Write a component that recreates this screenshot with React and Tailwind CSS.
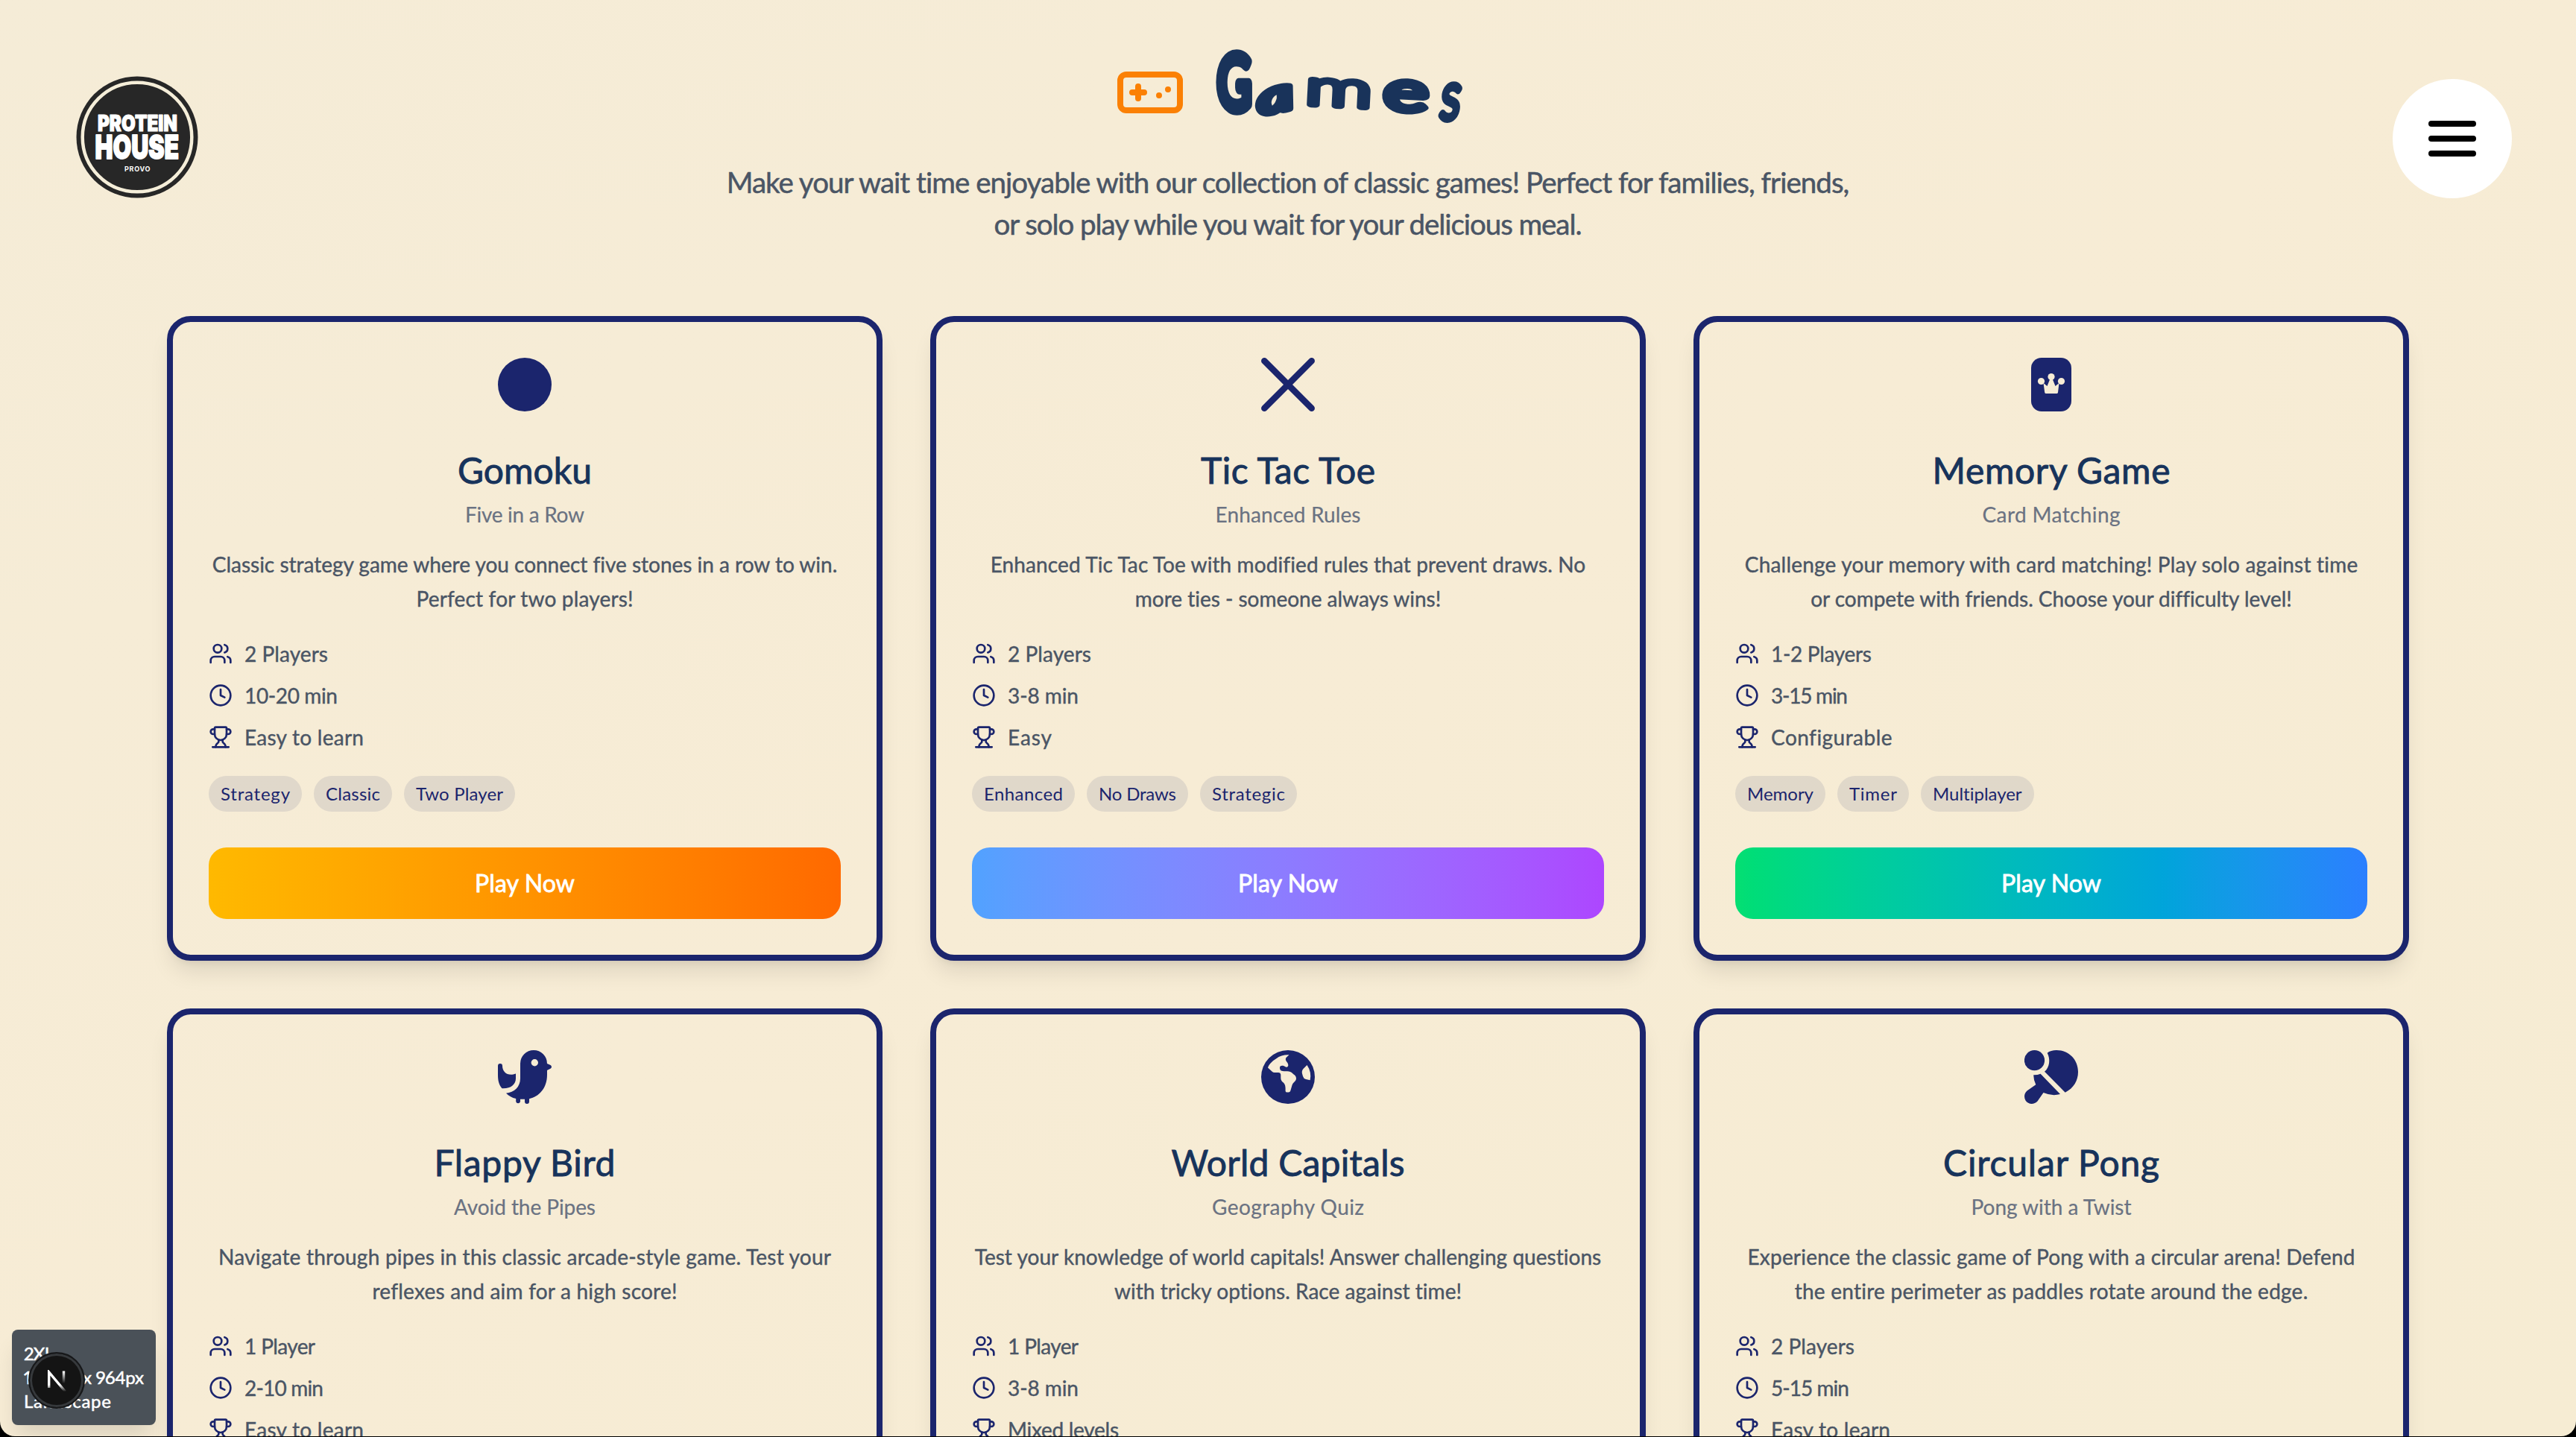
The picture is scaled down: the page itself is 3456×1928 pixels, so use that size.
import { useLayoutEffect, useRef, useState } from "react";
import { Users, Clock, Trophy } from "lucide-react";

/* One line of text, tracked so that its ink fills the given width. */
const BEARINGS = 1;
function Line({ w, className = "", children }) {
  const ref = useRef(null);
  const [ls, setLs] = useState(0);
  useLayoutEffect(() => {
    const natural = ref.current.getBoundingClientRect().width;
    setLs((w + BEARINGS - natural) / (children.length - 1));
  }, []);
  return (
    <span className={`block ${className}`}>
      <span ref={ref} className="inline-block whitespace-nowrap" style={{ letterSpacing: ls, marginRight: -ls }}>
        {children}
      </span>
    </span>
  );
}

const svg = { viewBox: "0 0 72 72", className: "size-[72px]", fill: "currentColor" };

const Stone = () => (
  <svg {...svg}><circle cx="36" cy="36" r="36" /></svg>
);
const Cross = () => (
  <svg {...svg} fill="none" stroke="currentColor" strokeWidth="8.5" strokeLinecap="round">
    <path d="M4.300 4.300 67.700 67.700M67.700 4.300 4.300 67.700" />
  </svg>
);
const Card = () => (
  <svg {...svg}>
    <rect x="9" width="54" height="72" rx="14" />
    <g fill="#f7ecd5">
      <circle cx="36" cy="25.5" r="4.6" />
      <circle cx="22.5" cy="31.5" r="4.6" />
      <circle cx="49.5" cy="31.5" r="4.6" />
      <path d="M25.5 34 30.500 38 34.500 28h3l4 10 5-4-1.500 12.500q-.3 1.500-1.800 1.500H29q-1.500 0-1.800-1.500Z" />
    </g>
  </svg>
);
const Bird = () => (
  <svg {...svg}>
    <path d="M0 21a3 3 0 0 1 6 0C6 30 14 35.500 24 31.500V38C24 46 17 52 5.500 51.300 1 46 0 40 0 33Z" />
    <path
      fillRule="evenodd"
      d="M11 57.700C22 57 30 49 30 38V18a18 18 0 0 1 36 0l4.500 2a2.600 2.600 0 0 1 0 4.700L66 27v6C66 51 55 62.500 42 65.200V69a3 3 0 0 1-6 0v-3.200h-6V69a3 3 0 0 1-5.800 0v-4C19 63.800 14.500 61.500 11 57.700ZM49.300 12a4.700 4.700 0 1 0 0 9.400 4.700 4.700 0 0 0 0-9.400Z"
    />
  </svg>
);
const Globe = () => (
  <svg {...svg}>
    <circle cx="36" cy="36" r="36" />
    <g fill="#f7ecd5">
      <path d="M37.500 6.300C31 6 25 7.500 20 11.500 13.500 15.500 10 20 9 23.500L15 29q1 1 3 1h5q3 0 3.300 3V37c0 4 2 5 4 7 2 2.500 2 4 2.300 7v4q.3 1.500 2.200 1.500h1.900q2 0 2.600-2l2.200-7.500c1-4 5.500-5 5.500-9s-3-5-5-7-4-2.800-7-2.800h-4.500c-4.500 0-5.500-2-5.500-4.700s3-3 5-2.400 3 2.400 5 1.400 1.500-4 0-6-3-4-1.500-6.500Z" />
      <path d="M61.500 20 56.500 25Q54 28 55 31.500l1 3.500q.7 3 4 4l5.600 1.300Q68 29.500 61.500 20Z" />
    </g>
  </svg>
);
const Paddle = () => (
  <svg {...svg}>
    <circle cx="13.500" cy="13.700" r="13.600" />
    <path d="M30.700 3.700C33.500 1.300 38 0 43 0 60 0 72 13 72 29 72 41 66 51 54.700 56.700L27 28.700C34 23 35 12 30.700 3.700Z" />
    <path d="M12.300 33.300Q17 33.600 21.600 31.700L48 59Q37 62 25.500 57L17.500 68.500C13 73.500 5 73 1.500 67.500C-1 63-.3 58 3.500 54.500L15.300 46.300Q12 39.500 12.300 33.300Z" />
  </svg>
);

const games = [
  {
    icon: Stone, title: ["Gomoku", 179], sub: ["Five in a Row", 159],
    desc: [["Classic strategy game where you connect five stones in a row to win.", 837], ["Perfect for two players!", 290]],
    meta: [["2 Players", 111], ["10-20 min", 124], ["Easy to learn", 159]],
    tags: [["Strategy", 92], ["Classic", 72], ["Two Player", 116]],
    grad: "from-[#ffb900] to-[#ff6900]",
  },
  {
    icon: Cross, title: ["Tic Tac Toe", 233], sub: ["Enhanced Rules", 194],
    desc: [["Enhanced Tic Tac Toe with modified rules that prevent draws. No", 797], ["more ties - someone always wins!", 410]],
    meta: [["2 Players", 111], ["3-8 min", 94], ["Easy", 58]],
    tags: [["Enhanced", 105], ["No Draws", 103], ["Strategic", 97]],
    grad: "from-[#51a2ff] to-[#ad46ff]",
  },
  {
    icon: Card, title: ["Memory Game", 318], sub: ["Card Matching", 184],
    desc: [["Challenge your memory with card matching! Play solo against time", 822], ["or compete with friends. Choose your difficulty level!", 643]],
    meta: [["1-2 Players", 134], ["3-15 min", 102], ["Configurable", 161]],
    tags: [["Memory", 88], ["Timer", 63], ["Multiplayer", 119]],
    grad: "from-[#05df72] to-[#2b7fff]",
  },
  {
    icon: Bird, title: ["Flappy Bird", 242], sub: ["Avoid the Pipes", 189],
    desc: [["Navigate through pipes in this classic arcade-style game. Test your", 821], ["reflexes and aim for a high score!", 408]],
    meta: [["1 Player", 94], ["2-10 min", 105], ["Easy to learn", 159]],
    grad: "from-[#ffb900] to-[#ff6900]",
  },
  {
    icon: Globe, title: ["World Capitals", 312], sub: ["Geography Quiz", 203],
    desc: [["Test your knowledge of world capitals! Answer challenging questions", 840], ["with tricky options. Race against time!", 466]],
    meta: [["1 Player", 94], ["3-8 min", 94], ["Mixed levels", 148]],
    grad: "from-[#51a2ff] to-[#ad46ff]",
  },
  {
    icon: Paddle, title: ["Circular Pong", 289], sub: ["Pong with a Twist", 214],
    desc: [["Experience the classic game of Pong with a circular arena! Defend", 814], ["the entire perimeter as paddles rotate around the edge.", 688]],
    meta: [["2 Players", 111], ["5-15 min", 104], ["Easy to learn", 159]],
    grad: "from-[#05df72] to-[#2b7fff]",
  },
];

const metaIcons = [Users, Clock, Trophy];

function GameCard({ game }) {
  const Icon = game.icon;
  return (
    <article className="flex h-[865px] flex-col rounded-[32px] border-8 border-[#1b256d] px-12 pt-12 text-center shadow-[0_20px_30px_-6px_rgba(0,0,0,0.1),0_8px_12px_-8px_rgba(0,0,0,0.1)]">
      <div className="flex h-[119px] justify-center text-[#1b256d]"><Icon /></div>
      <h2 className="text-[48px] leading-[64px] text-[#17335b] [-webkit-text-stroke:0.9px_#17335b]">
        <Line w={game.title[1]}>{game.title[0]}</Line>
      </h2>
      <p className="mt-[7px] text-[28px] leading-10 text-[#6a7282] [-webkit-text-stroke:0.2px_#6a7282]"><Line w={game.sub[1]}>{game.sub[0]}</Line></p>
      <p className="mt-6 h-[91px] text-[28px] leading-[46px] text-[#4a5565] [-webkit-text-stroke:0.4px_#4a5565]">
        {game.desc.map(([t, w]) => <Line key={t} w={w}>{t}</Line>)}
      </p>
      <ul className="mt-8 flex flex-col gap-4 text-left text-[28px] leading-10 text-[#4a5565] [-webkit-text-stroke:0.4px_#4a5565]">
        {game.meta.map(([t, w], i) => {
          const M = metaIcons[i];
          return (
            <li key={t} className="flex h-10 items-center gap-4">
              <M className="size-8 text-[#1b256d]" strokeWidth={2} />
              <Line w={w}>{t}</Line>
            </li>
          );
        })}
      </ul>
      {game.tags && (
        <>
          <div className="mt-8 flex gap-4 text-[24px] leading-8 text-[#1b256d]">
            {game.tags.map(([t, w]) => (
              <span key={t} className="rounded-full bg-[#1b256d]/10 px-4 py-2"><Line w={w}>{t}</Line></span>
            ))}
          </div>
          <button className={`mt-12 h-24 rounded-3xl bg-linear-to-r text-[32px] leading-[48px] text-white [-webkit-text-stroke:0.8px_white] ${game.grad}`}>
            <Line w={133}>Play Now</Line>
          </button>
        </>
      )}
    </article>
  );
}

function Logo() {
  return (
    <svg viewBox="0 0 164 164" className="absolute left-[102px] top-[102px] size-[164px] overflow-visible" fontFamily="Inter, sans-serif" fontWeight="900" fill="#fff">
      <circle cx="82" cy="82" r="81.500" fill="#272727" />
      <circle cx="82" cy="82" r="73.300" fill="none" stroke="#f5eed9" strokeWidth="4.500" />
      <g stroke="#fff" strokeLinejoin="round">
        <text transform="translate(29 74.200) scale(.78 1)" fontSize="29.500" strokeWidth="1.200" textLength="137" lengthAdjust="spacingAndGlyphs">PROTEIN</text>
        <text transform="translate(25.500 111) scale(.74 1)" fontSize="44" strokeWidth="1.800" textLength="152" lengthAdjust="spacingAndGlyphs">HOUSE</text>
      </g>
      <text x="65" y="128" fontSize="9" fontWeight="700" textLength="34.500">PROVO</text>
    </svg>
  );
}

function MenuButton() {
  return (
    <button className="absolute left-[3210px] top-[106px] flex size-40 flex-col items-center justify-center gap-3 rounded-full bg-white">
      <span className="h-2 w-16 rounded-full bg-black" />
      <span className="h-2 w-16 rounded-full bg-black" />
      <span className="h-2 w-16 rounded-full bg-black" />
    </button>
  );
}

function Heading() {
  return (
    <div className="flex h-[216px] justify-center">
      <svg viewBox="0 0 24 24" className="mt-[76px] size-24" fill="none" stroke="#fb8004" strokeWidth="2" strokeLinecap="round" strokeLinejoin="round">
        <rect x="2" y="6" width="20" height="12" rx="2" />
        <path d="M6 12h4M8 10v4M15 13v.01M18 11v.01" />
      </svg>
      <h1 className="ml-[35px] mt-[60px]">
        <svg
          viewBox="0 0 336 110"
          className="h-[110px] w-[336px] overflow-visible [&_text]:[vector-effect:non-scaling-stroke]"
          fontFamily="Lato, sans-serif"
          fontWeight="400"
          fill="#19335a"
          stroke="#19335a"
          strokeWidth="12"
          strokeLinejoin="round"
        >
          <text transform="translate(7 87) scale(.63 1)" fontSize="100">G</text>
          <text transform="translate(65 94) rotate(-12) scale(1.550 1)" fontSize="60" fontStyle="italic">a</text>
          <text transform="translate(124 80) rotate(3) scale(1.650 1)" fontSize="68" fontWeight="300" strokeWidth="10">m</text>
          <text transform="translate(229 87) rotate(3) scale(1.500 1)" fontSize="76" strokeWidth="11">e</text>
          <text transform="translate(304 99) skewX(-8) scale(.700 1)" fontSize="88" fontWeight="300" strokeWidth="9">s</text>
        </svg>
      </h1>
    </div>
  );
}

function DevBadge() {
  return (
    <div className="absolute left-4 top-[1784px] h-32 w-[193px] rounded-lg bg-[#4a5158] px-4 py-4 text-[24px] leading-8 text-white proportional-nums shadow-[0_20px_30px_-6px_rgba(0,0,0,0.12)] [-webkit-text-stroke:0.5px_white]">
      <Line w={39}>2XL</Line>
      <Line w={160}>1728px x 964px</Line>
      <Line w={116}>Landscape</Line>
      <div className="absolute left-[22px] top-[30px] flex size-[76px] items-center justify-center rounded-full border-2 border-[#17181a] bg-[#141414] shadow-[inset_0_0_0_3px_#36393c]">
        <svg viewBox="0 0 26 30" className="mt-0.5 h-[30px] w-[26px]" fill="none" strokeWidth="3.400">
          <defs>
            <linearGradient id="diag" x1="0" y1="0" x2="0" y2="1"><stop offset=".65" stopColor="#fff" /><stop offset="1" stopColor="#fff" stopOpacity="0" /></linearGradient>
            <linearGradient id="bar" gradientUnits="userSpaceOnUse" x1="0" y1="2" x2="0" y2="18"><stop stopColor="#fff" /><stop offset="1" stopColor="#fff" stopOpacity="0" /></linearGradient>
          </defs>
          <path d="M2.700 24V3L24.500 29" stroke="url(#diag)" />
          <path d="M22.500 1.500v17" stroke="url(#bar)" />
        </svg>
      </div>
    </div>
  );
}

export default function App() {
  return (
    <div className="h-[1928px] w-[3456px] overflow-hidden bg-black">
      <div className="relative h-[1927px] overflow-hidden rounded-b-[20px] bg-linear-to-br from-[#f5ecd7] via-[#f7ecd5] to-[#f6ecd3] font-['Lato',sans-serif]">
        <Logo />
        <MenuButton />
        <Heading />
        <p className="text-center text-[38.5px] leading-[56px] text-[#4a5565] [-webkit-text-stroke:0.5px_#4a5565]">
          <Line w={1507}>Make your wait time enjoyable with our collection of classic games! Perfect for families, friends,</Line>
          <Line w={788}>or solo play while you wait for your delicious meal.</Line>
        </p>
        <main className="mx-56 mt-24 grid grid-cols-3 gap-16">
          {games.map((g) => <GameCard key={g.title[0]} game={g} />)}
        </main>
        <DevBadge />
      </div>
    </div>
  );
}
